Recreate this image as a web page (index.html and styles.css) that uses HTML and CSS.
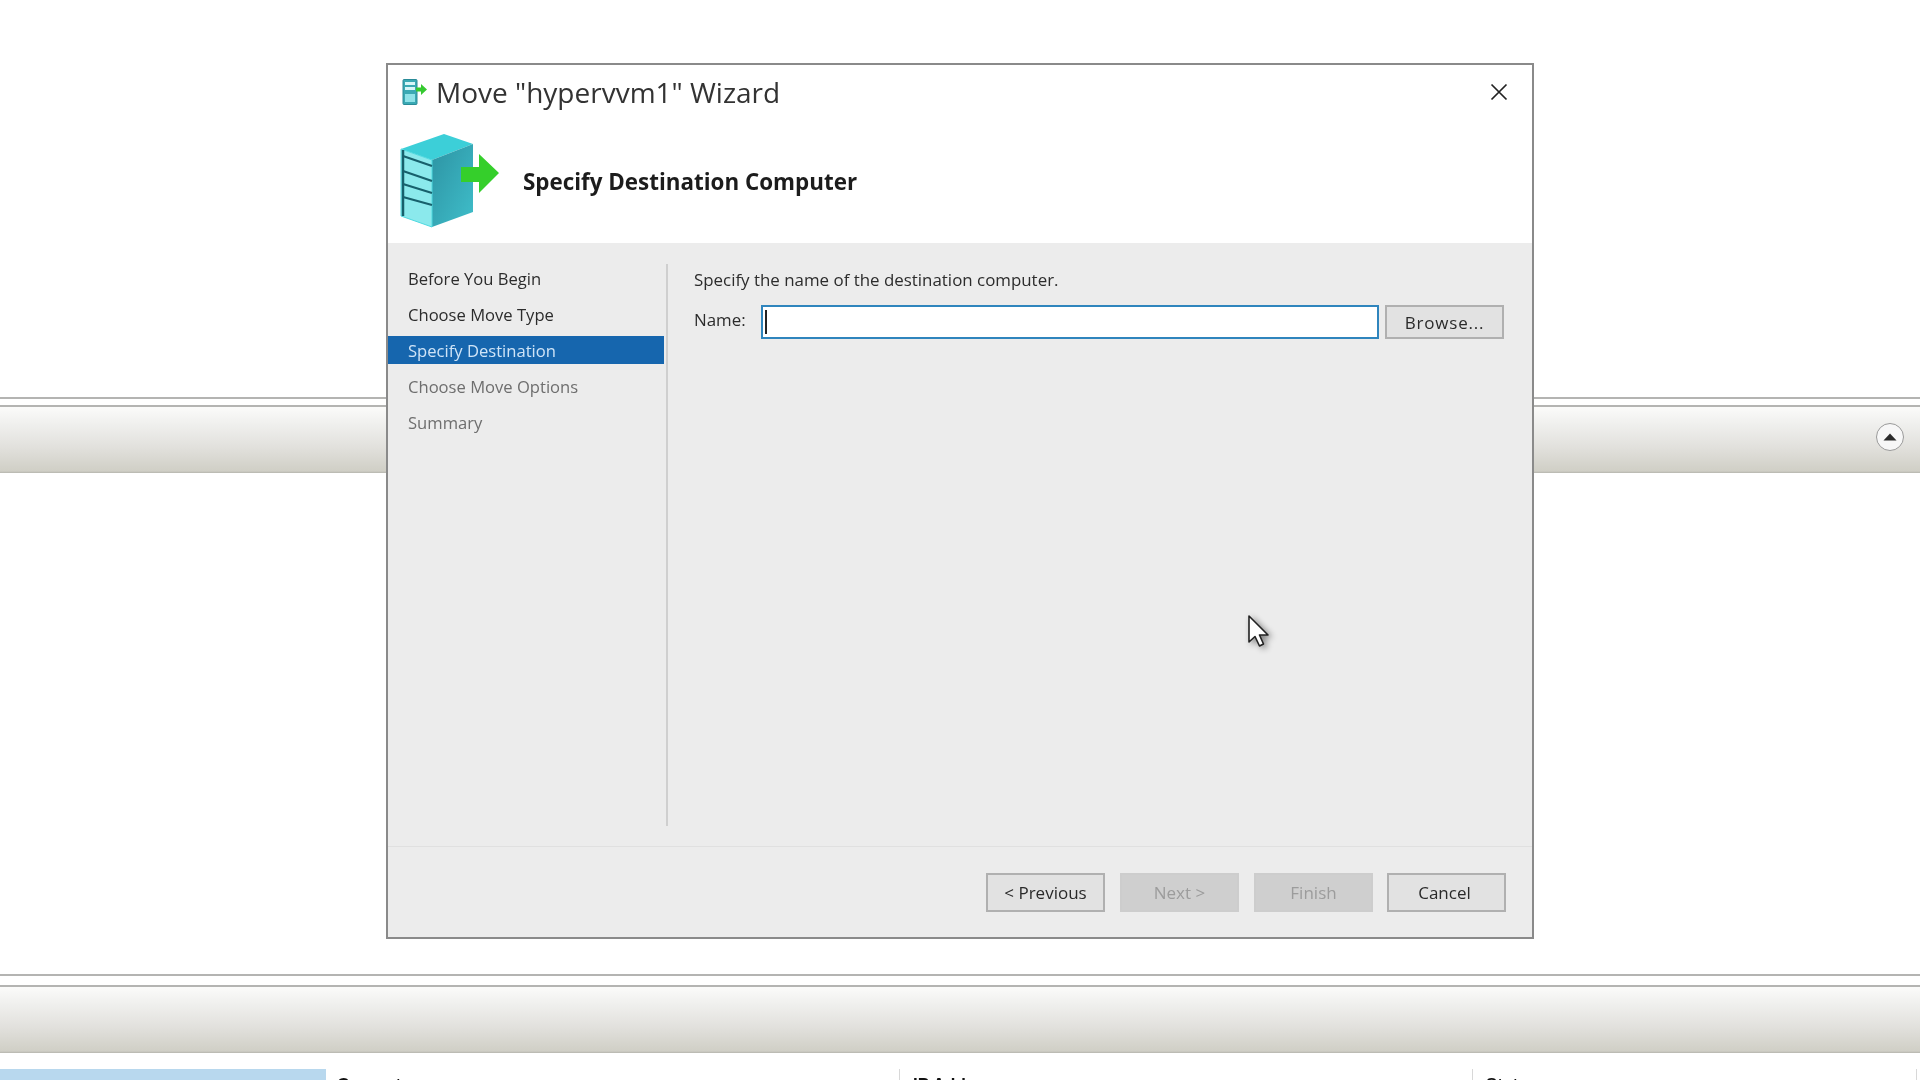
FILE: index.html
```html
<!DOCTYPE html>
<html>
	<head>
		<meta charset="utf-8">
		<title>Move Wizard</title>
		<link rel="stylesheet" href="styles.css">
	</head>
	<body>
		<div class="backdrop">
			<div class="rule rule-first"></div>
			<div class="rule rule-near"></div>
			<div class="band">
				<span class="collapse">
					<svg width="14" height="8" viewBox="0 0 14 8"><path d="M7 0.5 L13.5 7.5 L0.5 7.5 Z" fill="#2b2b2b"/></svg>
				</span>
			</div>
			<div class="rule rule-second"></div>
			<div class="rule rule-wide"></div>
			<div class="band"></div>
			<div class="grid-head">
				<div class="col col-selected"></div>
				<div class="col col-computer">Computer</div>
				<div class="col col-ip">IP Address</div>
				<div class="col col-status">Status</div>
			</div>
		</div>

		<div class="wizard">
			<div class="title-bar">
				<svg class="title-icon" width="26" height="26" viewBox="0 0 26 26">
					<rect x="1" y="0.5" width="14" height="25" rx="1" fill="#3aa9b4" stroke="#2a8b98"/>
					<rect x="3" y="3" width="10" height="3" fill="#d8f6f8"/>
					<rect x="3" y="8" width="10" height="3" fill="#d8f6f8"/>
					<rect x="3" y="15" width="10" height="8" fill="#8fe2e8"/>
					<path d="M14 8.5 H19 V5 L25 10.5 L19 16 V12.5 H14 Z" fill="#35c92f"/>
				</svg>
				<span class="title-text">Move "hypervvm1" Wizard</span>
				<svg class="close" width="18" height="18" viewBox="0 0 18 18"><path d="M1.5 1.5 L16.5 16.5 M16.5 1.5 L1.5 16.5" stroke="#222" stroke-width="1.7" fill="none"/></svg>
			</div>
			<div class="page-head">
				<svg class="head-icon" width="100" height="94" viewBox="0 0 100 94">
					<defs>
						<linearGradient id="side" x1="0" y1="0" x2="1" y2="1">
							<stop offset="0" stop-color="#2d93a3"/>
							<stop offset="1" stop-color="#3fbeca"/>
						</linearGradient>
					</defs>
					<path d="M1 15 L44 0 L73 10 L32 26 Z" fill="#3ccfd8"/>
					<path d="M32 26 L73 10 L73 78 L32 93 Z" fill="url(#side)"/>
					<path d="M1 15 L32 26 L32 93 L1 82 Z" fill="#8be9ec"/>
					<path d="M1 15 L32 26 L32 93 L1 82 Z" fill="none" stroke="#4fd9e0" stroke-width="1"/>
					<path d="M3 16 V82" stroke="#17606c" stroke-width="2.5"/>
					<path d="M3 22 L32 32 M3 37 L32 47 M3 50 L32 59 M3 63 L32 71" stroke="#17606c" stroke-width="2.2"/>
					<path d="M61 33 H79 V20 L99 39 L79 59 V48 H61 Z" fill="#35cf2b"/>
				</svg>
				<span class="head-text">Specify Destination Computer</span>
			</div>
			<div class="content">
				<ul class="steps">
					<li class="step">Before You Begin</li>
					<li class="step">Choose Move Type</li>
					<li class="step step-current">Specify Destination</li>
					<li class="step step-later">Choose Move Options</li>
					<li class="step step-later">Summary</li>
				</ul>
				<div class="form">
					<p class="hint">Specify the name of the destination computer.</p>
					<div class="name-row">
						<label class="name-label">Name:</label>
						<div class="name-input"><span class="caret"></span></div>
						<button class="btn btn-browse">Browse...</button>
					</div>
				</div>
			</div>
			<div class="footer">
				<button class="btn">&lt; Previous</button>
				<button class="btn btn-off">Next &gt;</button>
				<button class="btn btn-off">Finish</button>
				<button class="btn btn-cancel">Cancel</button>
			</div>
		</div>

		<svg class="pointer" width="24" height="36" viewBox="0 0 24 36">
			<path d="M3 3 L3 29 L9 23.5 L13.5 33 L17.5 31 L13.5 22 L22 22 Z" fill="#fff" stroke="#222" stroke-width="1.6" stroke-linejoin="round"/>
		</svg>
	</body>
</html>
```

FILE: styles.css
```css
html, body { margin: 0; height: 100%; overflow: hidden; background: #fff; }
body { font-family: "Open Sans", "Noto Sans", sans-serif; filter: blur(0.6px); }

/* window behind the dialog */
.backdrop { height: 1080px; display: flex; flex-direction: column; }
.rule { height: 2px; background: #b4b4b2; flex: none; }
.rule-first { margin-top: 397px; }
.rule-near { margin-top: 6px; }
.rule-second { margin-top: 501px; }
.rule-wide { margin-top: 9px; }
.band {
	height: 66px; flex: none;
	display: flex; align-items: center; justify-content: flex-end; padding-right: 16px;
	background: linear-gradient(#fbfbfa, #f0f0ee 25%, #e2e1dd 60%, #d0cfc6 97%, #b5b5ae);
}
.collapse {
	width: 26px; height: 26px; margin-bottom: 7px; border: 1.5px solid #9a9a9a; border-radius: 50%; background: #f7f7f7;
	display: flex; align-items: center; justify-content: center;
}
.grid-head { display: flex; flex: none; height: 30px; margin-top: 16px; font: bold 17px "Liberation Sans", sans-serif; color: #111; }
.col { padding: 6px 0 0 13px; border-left: 1px solid #d8d8d8; }
.col-selected { width: 326px; background: #b8d8ee; border: 0; padding: 0; }
.col-computer { width: 562px; border: 0; padding-left: 11px; }
.col-ip { width: 559px; }
.col-status { flex: 1; margin-right: 3px; border-right: 1px solid #d8d8d8; }

/* dialog */
.wizard {
	position: absolute; left: 386px; top: 63px; width: 1144px; height: 872px;
	display: flex; flex-direction: column;
	background: #ececec; border: 2px solid #8a8a8a;
}
.title-bar { height: 54px; background: #fff; display: flex; align-items: center; padding: 0 24px 0 14px; flex: none; }
.title-icon { flex: none; }
.title-text { margin-left: 8px; font-size: 28px; color: #333; flex: 1; }
.page-head { height: 124px; background: #fff; display: flex; align-items: center; padding-left: 12px; flex: none; }
.head-icon { flex: none; }
.head-text { margin-left: 23px; margin-top: 1px; font-size: 22.4px; font-weight: 700; color: #1c1c1c; }

.content { flex: 1; display: flex; min-height: 0; padding-top: 21px; border-bottom: 1px solid #e0e0e0; }
.steps {
	list-style: none; margin: 0 0 20px; padding: 0;
	width: 280px; flex: none; border-right: 2px solid #cfcfcf; box-sizing: border-box;
	font-size: 16.6px;
}
.step { height: 36px; line-height: 30px; margin-right: 2px; padding-left: 20px; color: #2c2c2c; }
.step-current { height: 28px; margin: 0 2px 8px 0; background: #1666ae; color: #cfe4f7; }
.step-later { color: #6e6e6e; }

.form { flex: 1; padding: 0 28px 0 26px; font-size: 16.9px; color: #2c2c2c; }
.hint { margin: 4px 0 0; line-height: 24px; }
.name-row { display: flex; margin-top: 13px; }
.name-label { width: 67px; line-height: 30px; flex: none; }
.name-input { flex: 1; height: 34px; box-sizing: border-box; background: #fff; border: 2px solid #2f85bd; padding: 3px 2px; }
.caret { display: block; width: 2px; height: 24px; background: #222; }

.btn {
	width: 119px; height: 39px; box-sizing: border-box; padding: 0;
	background: #e2e2e2; border: 2px solid #b0b0b0; color: #2a2a2a;
	font-family: inherit; font-size: 17px;
}
.btn-off { background: #cfcfcf; border-color: #cdcdcd; color: #9c9c9c; }
.btn-browse { height: 34px; margin-left: 6px; letter-spacing: 0.8px; }
.btn-cancel { padding-right: 4px; margin-left: -1px; }
.footer { height: 90px; flex: none; display: flex; justify-content: flex-end; gap: 15px; padding: 26px 26px 0 0; box-sizing: border-box; }

.pointer { position: absolute; left: 1246px; top: 613px; filter: drop-shadow(3px 2px 3px rgba(0,0,0,0.45)); }
```
